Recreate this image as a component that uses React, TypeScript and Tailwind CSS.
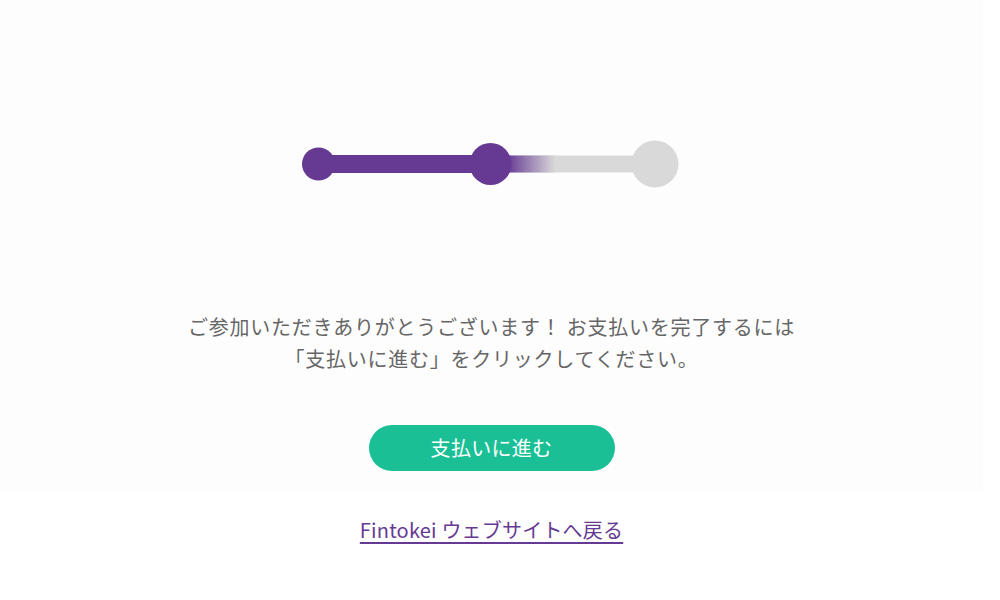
export default function App() {
  const font = { fontFamily: '"Noto Sans CJK JP", "Noto Sans", sans-serif' };
  return (
    <div className="w-[1000px] h-[600px] bg-white overflow-hidden" style={font}>
      <div className="w-[983px]">
        <div className="h-[492px] bg-[#fdfdfd] flex flex-col items-center">
          <div className="mt-[139px] h-[51px] w-[380px] flex items-center justify-center">
            <svg width="380" height="51" viewBox="0 0 380 51">
              <defs>
                <linearGradient id="fade" x1="0" x2="1" y1="0" y2="0">
                  <stop offset="0" stopColor="#663a93" />
                  <stop offset="1" stopColor="#d9d9d9" />
                </linearGradient>
              </defs>
              <rect x="190" y="16.5" width="160" height="17" fill="#d9d9d9" />
              <rect x="205" y="16.5" width="48" height="17" fill="url(#fade)" />
              <rect x="16" y="16" width="180" height="18" fill="#663a93" />
              <circle cx="16.5" cy="25" r="16.5" fill="#663a93" />
              <circle cx="188.5" cy="25" r="21" fill="#663a93" />
              <circle cx="353" cy="25" r="23.5" fill="#d9d9d9" />
            </svg>
          </div>
          <p className="mt-[121px] text-[20px] leading-[32px] text-[#666666] text-center tracking-[0.75px]">
            ご参加いただきありがとうございます！ お支払いを完了するには
            <br />
            「支払いに進む」をクリックしてください。
          </p>
          <button className="mt-[50px] w-[246px] h-[46px] rounded-full bg-[#1bbf95] text-white text-[20px] leading-none tracking-[0.3px] flex items-center justify-center">
            支払いに進む
          </button>
        </div>
        <div className="flex justify-center mt-[23px]">
          <a href="#" className="text-[20px] leading-[30px] text-[#663a93] underline underline-offset-[4px] tracking-[0.2px]">
            Fintokei ウェブサイトへ戻る
          </a>
        </div>
      </div>
    </div>
  );
}
